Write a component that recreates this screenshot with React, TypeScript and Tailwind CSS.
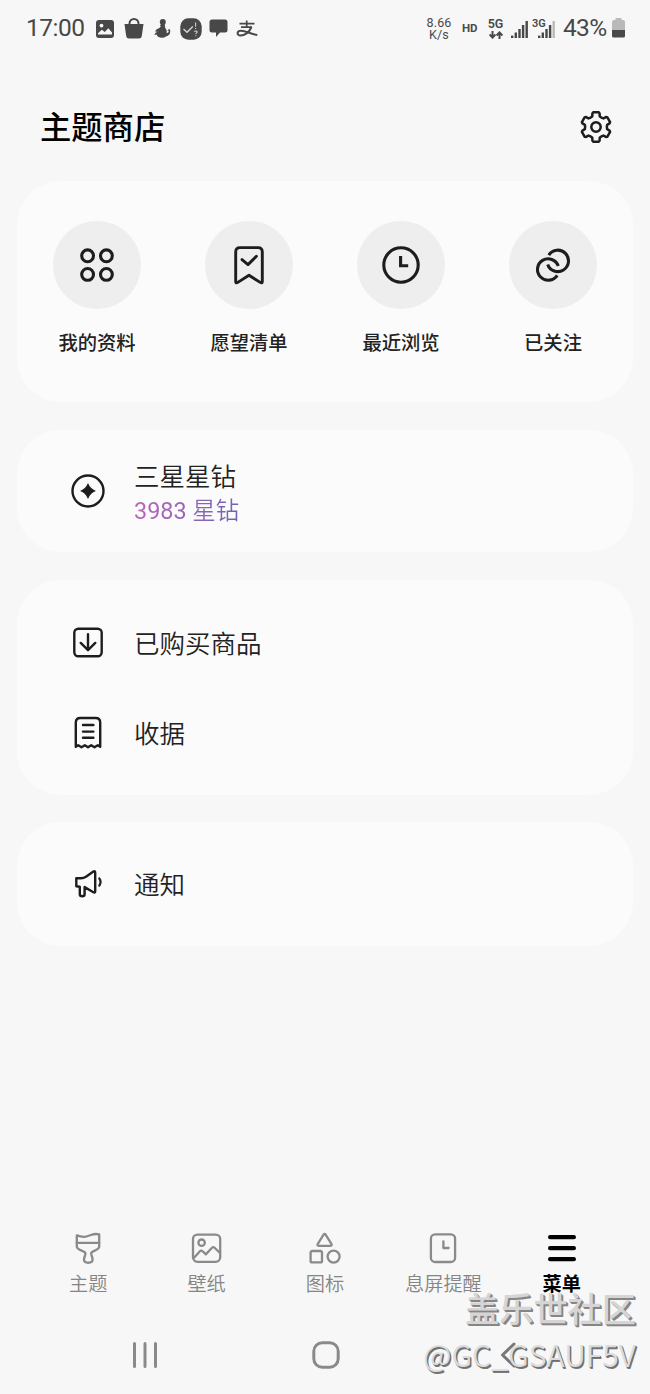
import type { ReactNode } from "react";

type IconProps = { children: ReactNode; size?: number; stroke?: number; className?: string };

/* Square stroked icon whose coordinate origin is its centre. */
function Icon({ children, size = 40, stroke = 2.4, className = "text-[#1d1d1f]" }: IconProps) {
  return (
    <svg
      width={size}
      height={size}
      viewBox={`${-size / 2} ${-size / 2} ${size} ${size}`}
      fill="none"
      stroke="currentColor"
      strokeWidth={stroke}
      strokeLinecap="round"
      strokeLinejoin="round"
      className={`shrink-0 ${className}`}
    >
      {children}
    </svg>
  );
}

const polar = (deg: number, r: number) => {
  const a = (deg * Math.PI) / 180;
  return `${(Math.sin(a) * r).toFixed(2)},${(-Math.cos(a) * r).toFixed(2)}`;
};

const gearPoints = [0, 60, 120, 180, 240, 300]
  .flatMap((t) => [polar(t - 27, 10.9), polar(t - 19, 11.4), polar(t - 15, 14), polar(t - 11, 14.9), polar(t + 11, 14.9), polar(t + 15, 14), polar(t + 19, 11.4), polar(t + 27, 10.9)])
  .join(" ");

const shortcuts = [
  {
    label: "我的资料",
    icon: (
      <Icon stroke={3.1}>
        <circle cx="-9.4" cy="-9.2" r="5.9" />
        <circle cx="9.4" cy="-9.2" r="5.9" />
        <circle cx="-9.4" cy="9.4" r="5.9" />
        <circle cx="9.4" cy="9.4" r="5.9" />
      </Icon>
    ),
  },
  {
    label: "愿望清单",
    icon: (
      <Icon stroke={2.9}>
        <path d="M-9 -17.4H9Q13.3 -17.4 13.3 -13.1V16.4Q13.3 18.8 11.2 17.4L0 10.2L-11.2 17.4Q-13.3 18.8 -13.3 16.4V-13.1Q-13.3 -17.4 -9 -17.4Z" />
        <path d="M-7 -5.4L-1 -0.4L7.4 -8.8" />
      </Icon>
    ),
  },
  {
    label: "最近浏览",
    icon: (
      <Icon stroke={3.1}>
        <circle r="17.2" />
        <path d="M-0.4 -9V0.7H7.2" strokeLinecap="butt" strokeLinejoin="miter" />
      </Icon>
    ),
  },
  {
    label: "已关注",
    icon: (
      <Icon stroke={3.1}>
        <g strokeLinecap="butt">
          <path d="M-4.2 -9.9A10.7 10.7 0 1 1 -5.3 -0.6" />
          <path d="M4.2 10.3A10.7 10.7 0 1 1 5.3 1" />
        </g>
      </Icon>
    ),
  },
];

const tabs = [
  {
    label: "主题",
    icon: (
      <Icon stroke={2.3} className="text-[#8a8a8a]">
        <path d="M-11.2 -12.6C-4 -10 -1 -11.5 3 -13Q7 -14.6 11.2 -13.6V-1.5C11.2 2.8 3.2 2.4 3.2 5.5C3.2 8 4.6 9 4.6 11.5C4.6 15.8 -4 15.8 -4 11.5C-4 9 -2.6 8 -2.6 5.5C-2.6 2.4 -11.2 2.8 -11.2 -1.5Z" />
        <path d="M-11.2 -5.2H11.2" />
      </Icon>
    ),
  },
  {
    label: "壁纸",
    icon: (
      <Icon stroke={2.3} className="text-[#8a8a8a]">
        <rect x="-14" y="-13.4" width="27.2" height="27.2" rx="4.5" />
        <circle cx="-5.4" cy="-5.3" r="3.2" />
        <path d="M-13 9.8L-7 3.2Q-5.7 2 -4.4 3.3L-1.2 6.4L5 -0.2Q6.3 -1.5 7.6 -0.2L13 5" />
      </Icon>
    ),
  },
  {
    label: "图标",
    icon: (
      <Icon stroke={2.3} className="text-[#8a8a8a]">
        <path d="M-1.4 -13.3Q-0.4 -14.9 0.6 -13.3L6.4 -4.2Q7.4 -2.2 5.4 -2.2H-6.2Q-8.2 -2.2 -7.2 -4.2Z" />
        <rect x="-14.4" y="3" width="11.4" height="11.4" rx="1.5" />
        <circle cx="8.6" cy="8.6" r="6" />
      </Icon>
    ),
  },
  {
    label: "息屏提醒",
    icon: (
      <Icon stroke={2.3} className="text-[#8a8a8a]">
        <rect x="-12.1" y="-13.6" width="24.2" height="27.6" rx="4.3" />
        <path d="M0.4 -6.6V0H5.6" />
      </Icon>
    ),
  },
  {
    label: "菜单",
    active: true,
    icon: (
      <Icon stroke={4.2} className="text-black">
        <path d="M-11.9 -10.8H11.9M-11.9 0.2H11.9M-11.9 11.2H11.9" />
      </Icon>
    ),
  },
];

function Signal({ faded = false }: { faded?: boolean }) {
  return (
    <svg width="17" height="17" viewBox="0 0 17 17" fill="currentColor">
      <rect x="0" y="14.6" width="2.4" height="2.4" />
      <rect x="3.6" y="11.5" width="2.4" height="5.5" />
      <rect x="7.3" y="8" width="2.4" height="9" />
      <rect x="10.9" y="4" width="2.4" height="13" />
      <rect x="14.5" y="0" width="2.4" height="17" fill={faded ? "#b9b9b9" : "currentColor"} />
    </svg>
  );
}

function StatusBar() {
  return (
    <header className="flex h-14 items-center justify-between pr-[25px] pl-[26px] text-[#484848]">
      <div className="flex items-center pt-px">
        <span className="w-[70px] text-[24.5px] leading-none font-normal tracking-[-0.5px] whitespace-nowrap">17:00</span>
        <svg width="18" height="18" viewBox="0 0 18 18">
          <rect width="18" height="18" rx="3" fill="currentColor" />
          <circle cx="5.5" cy="5.6" r="1.9" fill="#f6f6f6" />
          <path d="M2 13.2L5.8 9.7L8.8 12L12.3 8.3L16 12.4V14.5H2Z" fill="#f6f6f6" />
        </svg>
        <svg width="20" height="21" viewBox="0 0 20 21" className="ml-[10px]">
          <path d="M5.5 7V5.5A4.5 4.5 0 0 1 14.5 5.5V7" fill="none" stroke="currentColor" strokeWidth="2" />
          <path d="M0.5 6H19.5L17.8 18Q17.4 20.5 15 20.5H5Q2.6 20.5 2.2 18Z" fill="currentColor" />
        </svg>
        <svg width="17" height="19" viewBox="0 0 17 19" fill="currentColor" className="ml-[10px]">
          <circle cx="8.8" cy="3.1" r="3" />
          <path d="M6 6.5L7.5 4.5H10.5L11 7Q10.6 8 11.6 9.4Q13.2 11.5 12.6 14.2Q15.3 13.4 14.6 11.4L13.4 11.8Q14 10 16 10.4Q17.2 16.4 12 17.4Q10 19 7 18.7Q3.3 18.5 2.7 15.6L0.3 16Q1 13.2 3.6 12.8L1 12.4Q2.2 9.8 5 9.2L6.8 7.6Z" />
        </svg>
        <svg width="22" height="22" viewBox="0 0 22 22" className="ml-[9px]">
          <rect x="0.3" y="0.3" width="21.4" height="21.4" rx="8" fill="currentColor" />
          <path d="M3.5 11L7 14.3L12.8 8.5" fill="none" stroke="#d8d8d8" strokeWidth="1.3" />
          <path d="M15.6 4.5V8.7M15.6 10V11M14.2 13.4Q17.6 12.3 17 14.5Q16 15.1 15.8 16.2M15.8 17.3V18.2" fill="none" stroke="#d0d0d0" strokeWidth="1.1" />
        </svg>
        <svg width="19" height="19" viewBox="0 0 19 19" className="ml-[7px]">
          <path d="M3 0.5H16Q18.5 0.5 18.5 3V11Q18.5 13.5 16 13.5H11L7 18V13.5H3Q0.5 13.5 0.5 11V3Q0.5 0.5 3 0.5Z" fill="currentColor" />
        </svg>
        <svg width="22" height="18" viewBox="0 0 22 18" fill="none" stroke="currentColor" className="ml-[8px]">
          <path d="M3.5 3.6H18.5M10.7 0.5V7M5 7.1H16" strokeWidth="1.7" />
          <path d="M15.5 7C13 13 8 15.8 4 15.5C0.5 15 0.8 10.8 5 10.8C10 10.8 15 14.2 21.3 15" strokeWidth="2" />
        </svg>
      </div>
      <div className="flex items-center">
        <div className="flex w-[28px] flex-col items-center pt-[2px] text-[12.5px] leading-[12px] tracking-[0.2px]">
          <span>8.66</span>
          <span>K/s</span>
        </div>
        <span className="ml-[9px] w-[17px] pt-px text-[11.5px] leading-none font-bold">HD</span>
        <div className="ml-[8px] flex w-[17px] flex-col items-center gap-[1px]">
          <span className="text-[12.5px] leading-[12px] font-semibold">5G</span>
          <svg width="14" height="8" viewBox="0 0 14 8" fill="none" stroke="currentColor" strokeWidth="2">
            <path d="M3.5 0V7M0.6 3.5L3.5 6.6L6.4 3.5M10.5 8V1M7.6 4.5L10.5 1.4L13.4 4.5" />
          </svg>
        </div>
        <div className="mt-[3px] ml-[7px]">
          <Signal />
        </div>
        <div className="relative mt-[3px] ml-[10px]">
          <Signal faded />
          <span className="absolute -top-[3px] -left-[6px] bg-[#f7f7f7] text-[11px] leading-[11px] font-semibold">3G</span>
        </div>
        <span className="ml-[8px] w-[49px] pt-px text-[24.5px] leading-none font-normal tracking-[-0.7px] whitespace-nowrap">43%</span>
        <svg width="13" height="20" viewBox="0 0 13 20">
          <path d="M3.5 0H9.5V2H11Q13 2 13 4V12H0V4Q0 2 2 2H3.5Z" fill="#b9b9b9" />
          <path d="M0 12H13V18Q13 19.5 11.5 19.5H1.5Q0 19.5 0 18Z" fill="currentColor" />
        </svg>
      </div>
    </header>
  );
}

function Card({ children, className }: { children: ReactNode; className: string }) {
  return <section className={`mx-[17px] rounded-[44px] bg-[#fbfbfb] ${className}`}>{children}</section>;
}

function Row({ icon, children, className }: { icon: ReactNode; children: ReactNode; className: string }) {
  return (
    <div className={`flex items-center gap-[26px] pl-[51px] text-[25.5px] leading-[34px] font-[350] text-[#222] ${className}`}>
      {icon}
      {children}
    </div>
  );
}

export default function App() {
  return (
    <main className="relative flex h-[1394px] w-[650px] flex-col overflow-hidden bg-[#f7f7f7] font-[Roboto,'Noto_Sans_CJK_SC',sans-serif]">
      <StatusBar />

      <div className="flex h-[125px] items-center justify-between pt-[17px] pr-[34px] pl-[40px]">
        <h1 className="pt-[4px] text-[31.3px] leading-[44px] font-medium text-black">主题商店</h1>
        <Icon stroke={2.5}>
          <polygon points={gearPoints} />
          <circle r="4.7" />
        </Icon>
      </div>

      <Card className="grid h-[221px] grid-cols-4 px-1 pt-[40px]">
        {shortcuts.map((s) => (
          <div key={s.label} className="flex flex-col items-center">
            <div className="flex size-[88px] items-center justify-center rounded-full bg-[#eeeeee]">{s.icon}</div>
            <span className="mt-[21px] text-[19.3px] leading-[28px] font-medium text-[#222]">{s.label}</span>
          </div>
        ))}
      </Card>

      <Card className="mt-[28px] flex h-[122px] items-center">
        <Row
          className="h-full"
          icon={
            <Icon>
              <circle r="15.5" />
              <path d="M0 -7.9Q2.2 -2.2 7.9 0Q2.2 2.2 0 7.9Q-2.2 2.2 -7.9 0Q-2.2 -2.2 0 -7.9Z" fill="currentColor" stroke="none" />
            </Icon>
          }
        >
          <div className="flex flex-col items-start pt-[5px]">
            <span>三星星钻</span>
            <span className="bg-linear-to-r from-[#b965b8] to-[#6f62b6] bg-clip-text text-[23.4px] leading-[34px] text-transparent">
              <span className="font-normal">3983</span> 星钻
            </span>
          </div>
        </Row>
      </Card>

      <Card className="mt-[28px] h-[215px] pt-[18px]">
        <Row
          className="h-[90px]"
          icon={
            <Icon>
              <rect x="-13.7" y="-14.2" width="27.4" height="27.4" rx="4" />
              <path d="M0 -8.7V6.8M-7.3 -0.1L0 7.2L7.3 -0.1" />
            </Icon>
          }
        >
          <span className="pt-[2px]">已购买商品</span>
        </Row>
        <Row
          className="h-[90px]"
          icon={
            <Icon>
              <path d="M-12.2 13.8V-10.4Q-12.2 -15 -7.6 -15H7.6Q12.2 -15 12.2 -10.4V13.8L9.8 12.2L6.5 14.2L3.2 12.2L0 14.2L-3.2 12.2L-6.5 14.2L-9.8 12.2Z" />
              <path d="M-5 -8H5.4M-5 -1.4H5.4M-5 4.8H5.4" />
            </Icon>
          }
        >
          <span className="pt-[2px]">收据</span>
        </Row>
      </Card>

      <Card className="mt-[27px] h-[124px]">
        <Row
          className="h-full"
          icon={
            <Icon>
              <path d="M-11.7 -5.7H-7Q-4.4 -5.7 -2 -7.3L5.4 -12.4Q7.2 -13.4 7.2 -11.3V7.3Q7.2 9.2 5.4 8.2L-3.4 3.1V10.2Q-3.4 12.2 -5.8 12.2Q-8.2 12.2 -8.2 10.2V2.8L-11.7 2.2Z" />
              <path d="M11.3 -5.6Q13.8 -2 11.3 1.6" strokeWidth="2.2" />
            </Icon>
          }
        >
          <span className="pt-[2px]">通知</span>
        </Row>
      </Card>

      <nav className="mx-[29px] mt-auto grid grid-cols-5">
        {tabs.map((t) => (
          <div key={t.label} className="flex flex-col items-center">
            {t.icon}
            <span
              className={`mt-[4px] text-[19.2px] leading-[26px] whitespace-nowrap ${t.active ? "font-bold text-black" : "font-[350] text-[#858585]"}`}
            >
              {t.label}
            </span>
          </div>
        ))}
      </nav>

      <div className="mx-auto grid h-[96px] w-[544px] shrink-0 grid-cols-3 justify-items-center pt-[37px] pl-[2px]">
        <Icon stroke={3} className="text-[#8a8a8a]">
          <path d="M-10.5 -11.5V11.5M0 -11.5V11.5M10.5 -11.5V11.5" />
        </Icon>
        <Icon stroke={3} className="text-[#8a8a8a]">
          <rect x="-12.2" y="-12.2" width="24.4" height="24.4" rx="8.5" />
        </Icon>
        <Icon stroke={3} className="text-[#777777]">
          <path d="M7 -11L-4.5 0L7 11" />
        </Icon>
      </div>

      <div className="absolute right-[14px] bottom-[18px] flex flex-col items-end whitespace-nowrap">
        <span className="text-[34.2px] leading-[44px] font-medium text-[#d6d4d4] [text-shadow:1px_1px_0_#858585,2px_2px_0_#858585]">盖乐世社区</span>
        <span className="font-['Noto_Sans_CJK_SC',sans-serif] text-[30.2px] leading-[44px] font-[350] text-[#dcdcdc] [text-shadow:1px_1px_0_#6f6f6f,1.5px_1.5px_0_#7a7a7a]">
          @GC_GSAUF5V
        </span>
      </div>
    </main>
  );
}
